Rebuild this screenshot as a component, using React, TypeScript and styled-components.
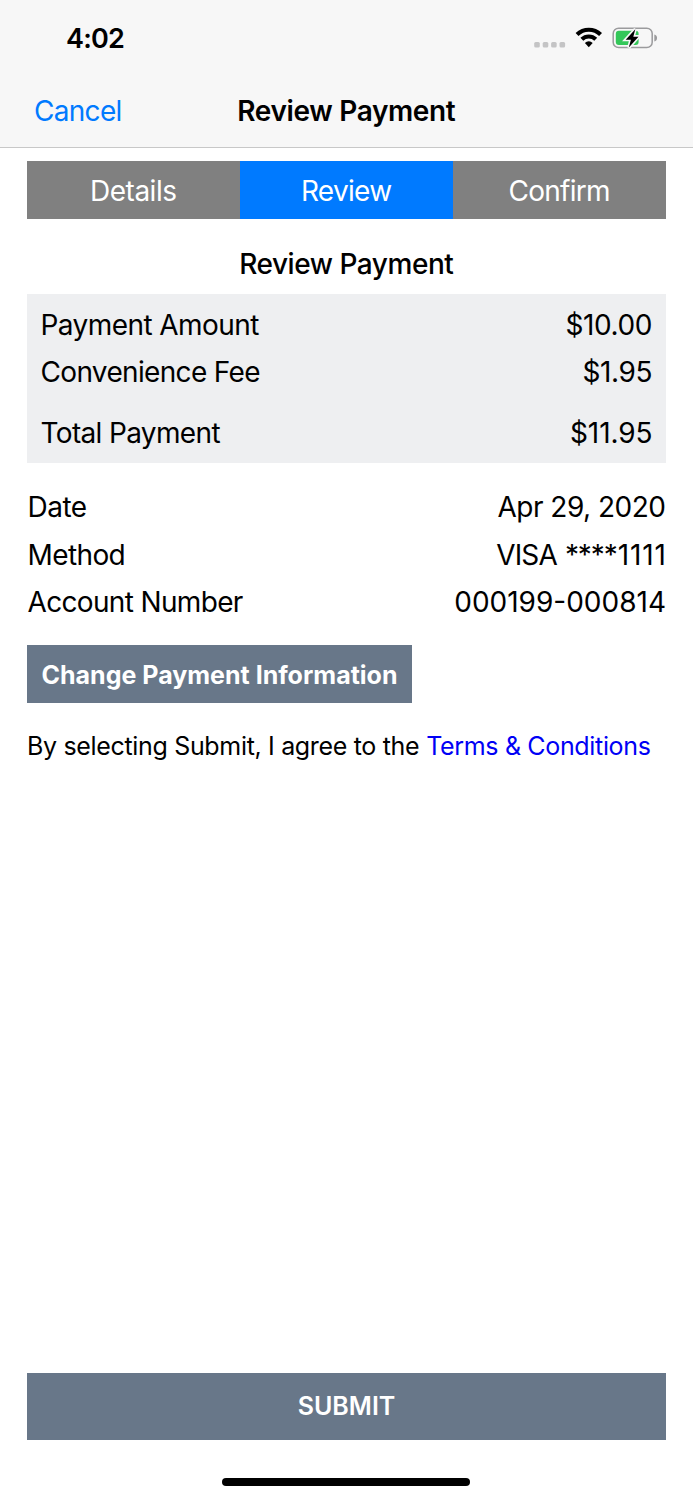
import React from "react";
import styled, { createGlobalStyle } from "styled-components";

const GlobalStyle = createGlobalStyle`
  * { box-sizing: border-box; }
  body {
    margin: 0;
    background: #fff;
    color: #000;
    font-family: Inter, "Liberation Sans", sans-serif;
    font-size: 28px;
    -webkit-font-smoothing: antialiased;
  }
`;

const Screen = styled.div`
  display: flex;
  flex-direction: column;
  width: 693px;
  height: 1500px;
  overflow: hidden;
`;

const Header = styled.header`
  height: 148px;
  background: #f7f7f7;
  border-bottom: 1px solid #c8c8c8;
`;

const StatusBar = styled.div`
  display: flex;
  align-items: center;
  justify-content: space-between;
  height: 76px;
  padding: 0 35px 0 66px;
`;

const Label = styled.span<{ $track?: number }>`
  margin-right: ${(p) => -(p.$track ?? 0)}px;
  letter-spacing: ${(p) => p.$track ?? 0}px;
  white-space: pre;
`;

const Clock = styled(Label)`
  font-size: 27px;
  font-weight: 600;
`;

const NavBar = styled.div`
  display: grid;
  grid-template-columns: 200px 1fr 200px;
  align-items: center;
  height: 70px;
`;

const CancelButton = styled.button`
  border: 0;
  padding: 0 0 0 34px;
  background: none;
  color: #007aff;
  font: inherit;
  text-align: left;
`;

const NavTitle = styled.h1`
  margin: 0;
  font-size: 28px;
  font-weight: 600;
  text-align: center;
`;

const Content = styled.main`
  display: flex;
  flex-direction: column;
  flex: 1;
  padding: 13px 27px 0;
`;

const Steps = styled.div`
  display: grid;
  grid-template-columns: repeat(3, 1fr);
  height: 58.4px;
`;

const Step = styled.div<{ $active?: boolean }>`
  display: flex;
  align-items: center;
  justify-content: center;
  padding-top: 2px;
  background: ${(p) => (p.$active ? "#007aff" : "#808080")};
  color: #fff;
`;

const SectionTitle = styled.h2`
  margin: 27.6px 0 13px;
  font-size: 28px;
  font-weight: 500;
  line-height: 34px;
  text-align: center;
`;

const Summary = styled.section`
  height: 168.7px;
  padding: 7px 13.5px 0;
  background: #eeeff1;
`;

const Info = styled.section`
  padding: 20.8px 0 0 0.5px;
`;

const Row = styled.div<{ $gap?: number }>`
  display: flex;
  align-items: center;
  justify-content: space-between;
  height: 47.5px;
  margin-top: ${(p) => p.$gap ?? 0}px;
`;

const CardNumber = styled.div`
  display: flex;
`;

const ChangeButton = styled.button`
  align-self: flex-start;
  width: 385px;
  height: 58.5px;
  margin-top: 19px;
  padding: 2px 0 0;
  border: 0;
  background: #687789;
  color: #fff;
  font: 700 25px Inter, sans-serif;
`;

const Agreement = styled.p`
  margin: 27.5px 0 0;
  font-size: 25px;
  line-height: 30px;
  white-space: pre;
`;

const TermsLink = styled.a`
  color: #0000f5;
`;

const SubmitButton = styled.button`
  width: 100%;
  height: 67px;
  margin-top: auto;
  padding: 0;
  border: 0;
  background: #687789;
  color: #fff;
  font: 600 25px Inter, sans-serif;
`;

const HomeArea = styled.footer`
  display: flex;
  justify-content: center;
  height: 60.5px;
  padding-top: 38.3px;
`;

const HomeIndicator = styled.div`
  width: 248px;
  height: 8.5px;
  margin-right: 1px;
  border-radius: 5px;
  background: #000;
`;

const StatusIcons = () => (
  <svg width="124" height="26" viewBox="534 25 124 26">
    {[534.2, 542.7, 551.1, 559.5].map((x) => (
      <rect key={x} x={x} y="42" width="5.6" height="5.6" rx="1.5" fill="#c4c4c5" />
    ))}
    <path d="M575.6 33.1a18.7 18.7 0 0 1 26.4 0l-2.9 3a14.6 14.6 0 0 0-20.6 0z" />
    <path d="M580.4 37.8a12.2 12.2 0 0 1 16.8 0l-2.9 3a8 8 0 0 0-11 0z" />
    <path d="M584.9 42.9a5.7 5.7 0 0 1 7.8 0l-3.9 4.4z" />
    <rect x="613.2" y="28.2" width="39" height="19.4" rx="5.4" fill="none" stroke="#9b9b9d" strokeWidth="1.5" />
    <path d="M654.3 34.4a3.6 3.6 0 0 1 0 7z" fill="#9b9b9d" />
    <rect x="615.8" y="30.8" width="22.8" height="14.2" rx="3" fill="#34c759" />
    <path d="M635.3 29.2l-9.6 10.5h5.2l-2.1 7.9 9.7-10.9h-5.2z" stroke="#f7f7f7" strokeWidth="3.2" fill="#f7f7f7" />
    <path d="M635.3 29.2l-9.6 10.5h5.2l-2.1 7.9 9.7-10.9h-5.2z" />
  </svg>
);

export default function App() {
  return (
    <>
      <GlobalStyle />
      <Screen>
        <Header>
          <StatusBar>
            <Clock $track={-0.8}>4:02</Clock>
            <StatusIcons />
          </StatusBar>
          <NavBar>
            <CancelButton><Label $track={-0.7}>Cancel</Label></CancelButton>
            <NavTitle><Label $track={-0.36}>Review Payment</Label></NavTitle>
          </NavBar>
        </Header>
        <Content>
          <Steps>
            <Step><Label $track={-0.5}>Details</Label></Step>
            <Step $active><Label $track={-0.7}>Review</Label></Step>
            <Step><Label $track={-0.7}>Confirm</Label></Step>
          </Steps>
          <SectionTitle><Label $track={-0.45}>Review Payment</Label></SectionTitle>
          <Summary>
            <Row><Label $track={-0.57}>Payment Amount</Label><Label $track={-0.4}>$10.00</Label></Row>
            <Row><Label $track={-0.67}>Convenience Fee</Label><Label $track={-0.4}>$1.95</Label></Row>
            <Row $gap={13.5}><Label $track={-0.65}>Total Payment</Label><Label $track={-0.1}>$11.95</Label></Row>
          </Summary>
          <Info>
            <Row><Label $track={-0.5}>Date</Label><Label $track={-0.5}>Apr 29, 2020</Label></Row>
            <Row>
              <Label $track={-0.6}>Method</Label>
              <CardNumber>
                <Label $track={-0.8}>VISA </Label>
                <Label $track={-1.1}>****</Label>
                <Label $track={0.9}>1111</Label>
              </CardNumber>
            </Row>
            <Row><Label $track={-0.66}>Account Number</Label><Label>000199-000814</Label></Row>
          </Info>
          <ChangeButton><Label>Change Payment Information</Label></ChangeButton>
          <Agreement>
            <Label $track={-0.33}>By selecting Submit, I agree to the </Label>
            <TermsLink><Label $track={-0.34}>Terms &amp; Conditions</Label></TermsLink>
          </Agreement>
          <SubmitButton><Label>SUBMIT</Label></SubmitButton>
        </Content>
        <HomeArea>
          <HomeIndicator />
        </HomeArea>
      </Screen>
    </>
  );
}
